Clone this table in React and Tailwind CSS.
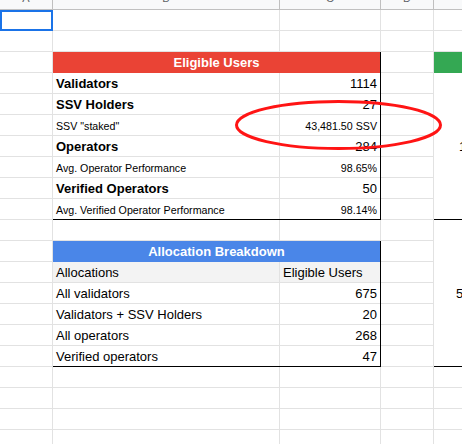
import React from "react";

const GRID = "border-[#e2e2e2]";

function DataRow({ label, value, bold, small, last, shade }) {
  const size = small ? "text-[10.67px] leading-[13px]" : "text-[13px] leading-[15px]";
  const weight = bold ? "font-bold" : "";
  return (
    <div
      className={`flex shrink-0 ${last ? "h-[20px]" : "h-[21px] border-b " + GRID} ${shade ? "bg-[#f3f3f3]" : ""}`}
    >
      <div className={`w-[227px] shrink-0 border-r ${GRID} flex items-end pl-[3px] pb-[2px] whitespace-nowrap ${size} ${weight}`}>
        {label}
      </div>
      <div
        className={`flex-1 flex items-end pb-[2px] whitespace-nowrap ${size} ${
          shade ? "justify-start pl-[3px]" : "justify-end pr-[3px]"
        }`}
      >
        {value}
      </div>
    </div>
  );
}

export default function App() {
  const cells = Array.from({ length: 70 });
  return (
    <div className="relative w-[462px] h-[444px] overflow-hidden bg-white text-black font-['Liberation_Sans',Arial,sans-serif]">
      {/* column header */}
      <div className="flex h-[10px] bg-[#f8f9fa] border-b border-[#c0c0c0] overflow-hidden text-[11px] leading-[12px] text-[#5f6368]">
        <div className="w-[53px] shrink-0 border-r border-[#c0c0c0] flex justify-center">
          <span className="mt-[-8px]">A</span>
        </div>
        <div className="w-[227px] shrink-0 border-r border-[#c0c0c0] flex justify-center">
          <span className="mt-[-8px]">B</span>
        </div>
        <div className="w-[101px] shrink-0 border-r border-[#c0c0c0] flex justify-center">
          <span className="mt-[-8px]">C</span>
        </div>
        <div className="w-[53px] shrink-0 border-r border-[#c0c0c0] flex justify-center">
          <span className="mt-[-8px]">D</span>
        </div>
        <div className="flex-1" />
      </div>

      {/* sheet body */}
      <div className="grid grid-cols-[53px_227px_101px_53px_140px] auto-rows-[21px]">
        {cells.map((_, i) => (
          <div key={i} className={`relative border-r border-b ${GRID}`}>
            {i === 0 && (
              <div className="absolute top-0 left-0 -right-px -bottom-px border-2 border-[#1a73e8]" />
            )}
          </div>
        ))}

        {/* Eligible Users table */}
        <div className="col-start-2 col-span-2 row-start-3 row-span-8 -mt-px -ml-px border border-black bg-white flex flex-col">
          <div className="h-[21px] shrink-0 bg-[#ea4335] flex items-end justify-center pb-[3px] text-white font-bold text-[13px] leading-[15px]">
            Eligible Users
          </div>
          <DataRow label="Validators" value="1114" bold />
          <DataRow label="SSV Holders" value="27" bold />
          <DataRow label={'SSV "staked"'} value="43,481.50 SSV" small />
          <DataRow label="Operators" value="284" bold />
          <DataRow label="Avg. Operator Performance" value="98.65%" small />
          <DataRow label="Verified Operators" value="50" bold />
          <DataRow label="Avg. Verified Operator Performance" value="98.14%" small last />
        </div>

        {/* Allocation Breakdown table */}
        <div className="col-start-2 col-span-2 row-start-12 row-span-6 -mt-px -ml-px border border-black bg-white flex flex-col">
          <div className="h-[21px] shrink-0 bg-[#4a86e8] flex items-end justify-center pb-[3px] text-white font-bold text-[13px] leading-[15px]">
            Allocation Breakdown
          </div>
          <DataRow label="Allocations" value="Eligible Users" shade />
          <DataRow label="All validators" value="675" />
          <DataRow label="Validators + SSV Holders" value="20" />
          <DataRow label="All operators" value="268" />
          <DataRow label="Verified operators" value="47" last />
        </div>

        {/* green table (partly visible) */}
        <div className="col-start-5 row-start-3 row-span-15 -mt-px -ml-px border border-black bg-white flex flex-col">
          <div className="h-[21px] shrink-0 bg-[#34a853]" />
          <div className="h-[147px] shrink-0 border-b border-black flex items-center pl-[25px] text-[13px] leading-[15px] whitespace-nowrap">
            1,000
          </div>
          <div className="flex-1 flex items-center pl-[22px] text-[13px] leading-[15px] whitespace-nowrap">
            500
          </div>
        </div>
      </div>

      {/* red annotation ellipse */}
      <svg
        className="absolute top-0 left-0 pointer-events-none"
        width="462"
        height="444"
        viewBox="0 0 462 444"
      >
        <ellipse cx="338.5" cy="125" rx="102" ry="23.5" fill="none" stroke="#ff1414" strokeWidth="3" />
      </svg>
    </div>
  );
}
